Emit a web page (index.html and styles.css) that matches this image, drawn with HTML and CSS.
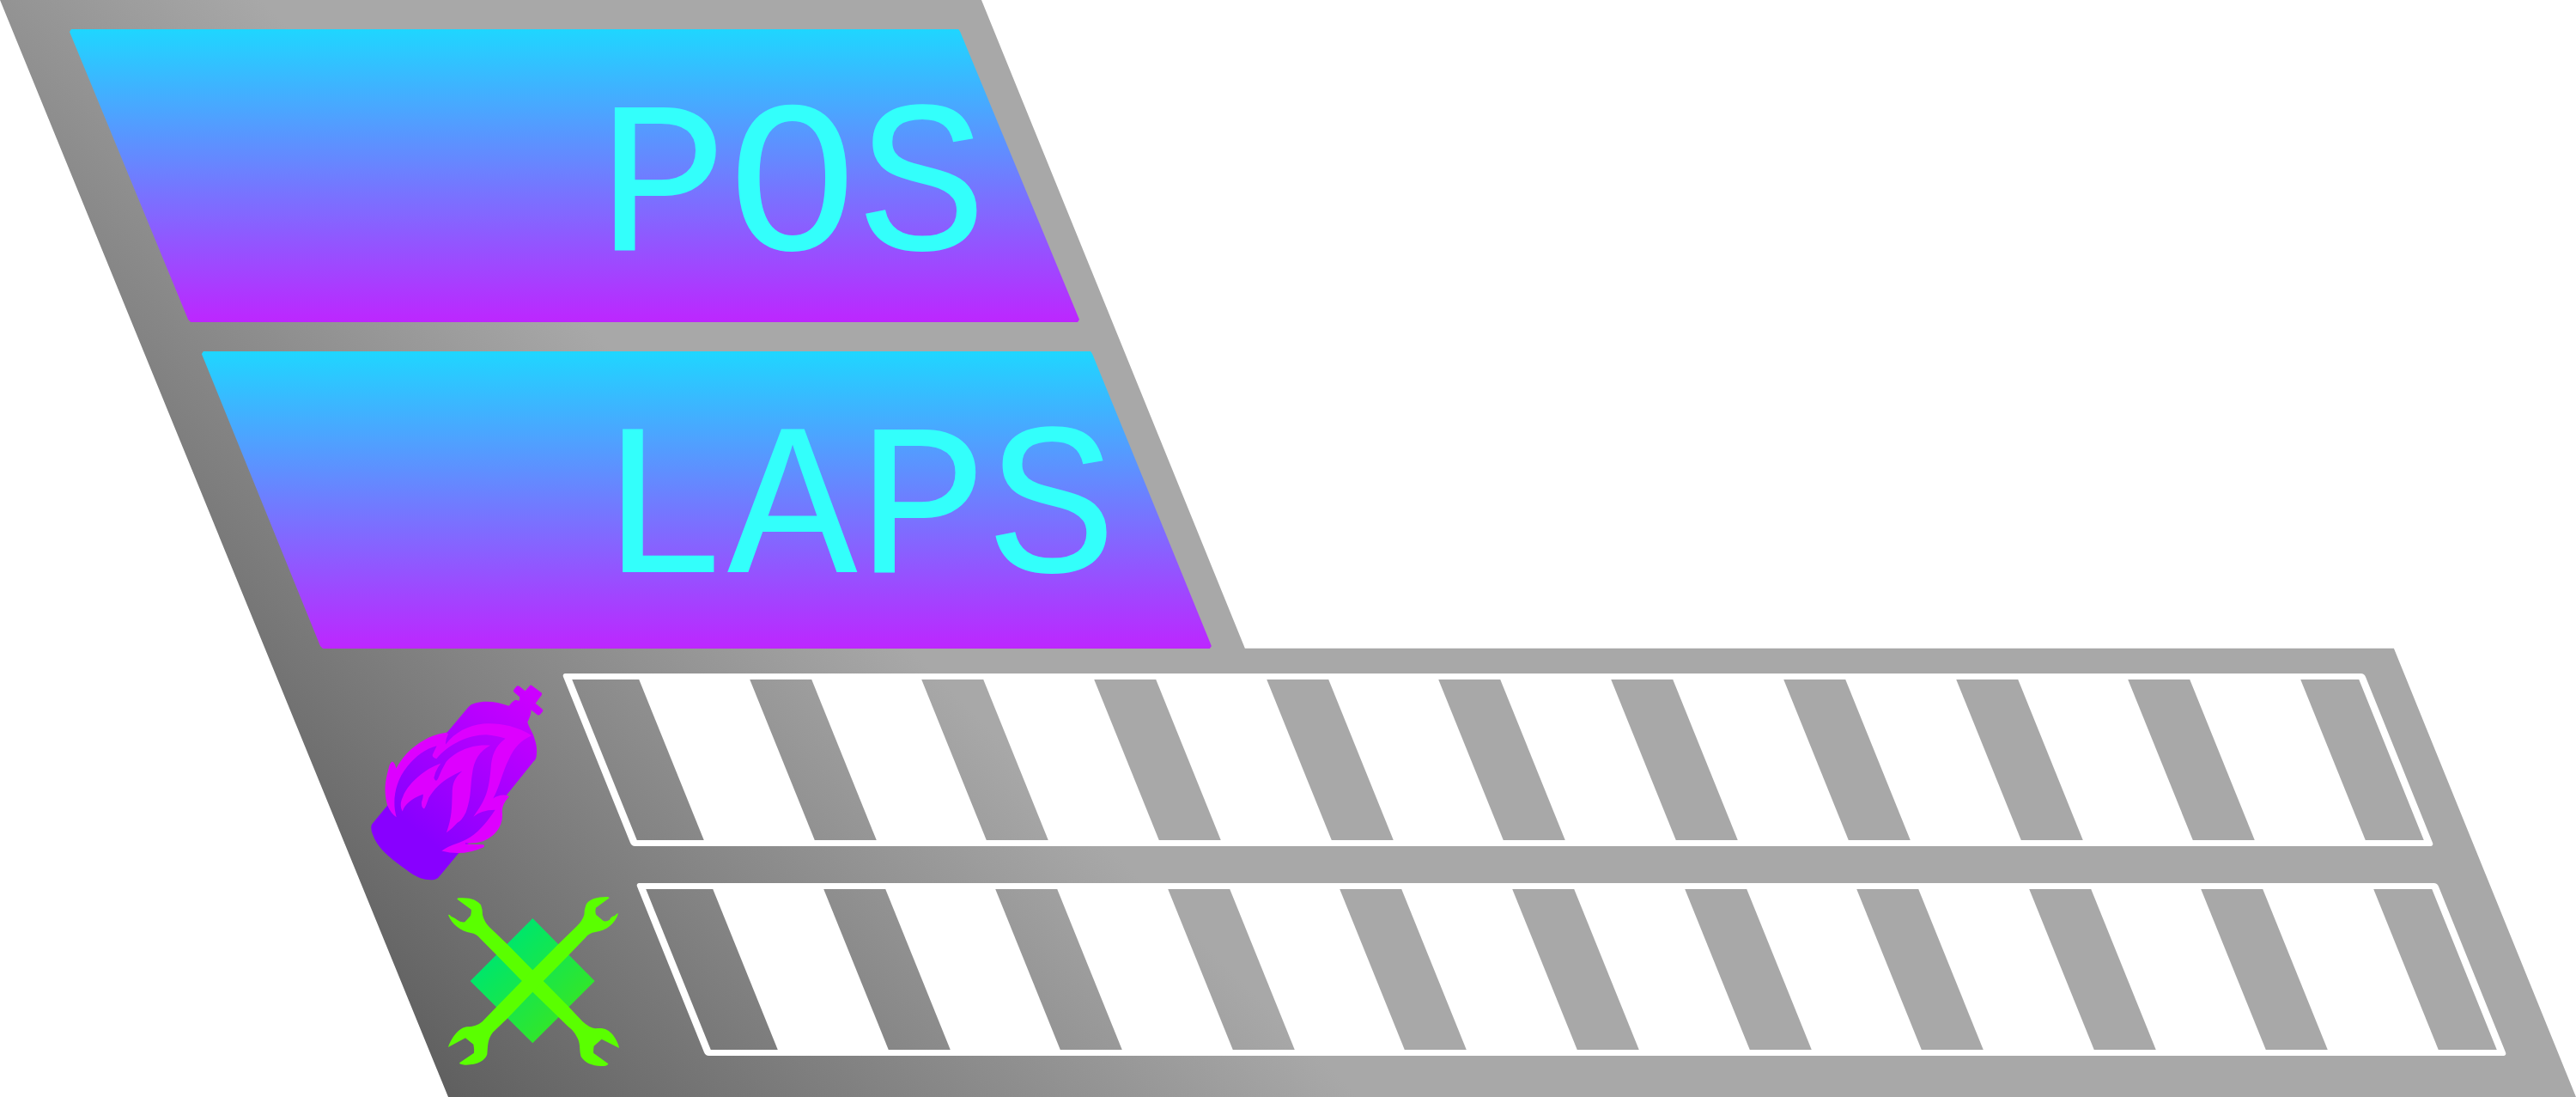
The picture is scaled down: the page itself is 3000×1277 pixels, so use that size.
FILE: index.html
```html
<!DOCTYPE html>
<html lang="en">
<head>
<meta charset="utf-8">
<title>Race HUD</title>
<link rel="stylesheet" href="styles.css">
</head>
<body>
<main class="hud">
  <section class="panel panel-pos"><h2 class="label">POS</h2></section>
  <section class="panel panel-laps"><h2 class="label">LAPS</h2></section>
  <section class="gauge gauge-boost">
    <svg class="icon icon-boost" viewBox="38 50 603 683" aria-hidden="true">
      <defs>
        <linearGradient id="body" gradientUnits="userSpaceOnUse" x1="200" y1="560" x2="600" y2="80">
          <stop offset="0" stop-color="#8800ff"/><stop offset="1" stop-color="#cc00ff"/>
        </linearGradient>
      </defs>
      <path fill="url(#body)" d="M305 215L378 128Q386 118 402 114C440 104 480 110 520 124Q532 108 543 103L556 106L558 93L538 76Q534 71 538 66L547 55Q551 51 556 55L577 71L592 54Q596 49 601 53L633 77Q637 81 634 86L613 115L636 134Q641 139 638 143L629 154Q625 158 620 155L597 137Q600 150 585 180C592 205 604 215 610 240C618 262 619 285 615 305Q613 312 606 318L512 435L480 500L343 640L278 718Q270 730 255 731C215 733 190 718 150 688C100 650 60 620 43 570Q35 545 42 536L95 472L120 350L250 240Z"/>
      <path fill="#dd00ff" d="M302 217C250 222 190 255 150 305Q135 325 126 342Q122 322 113 318Q103 322 99 345C84 400 85 430 95 470Q108 500 127 512C112 460 120 390 165 335C195 298 230 272 268 263Q262 275 253 295Q252 303 267 308C310 255 380 225 440 224Q480 227 508 238C470 265 460 300 457 340C450 420 440 450 396 511Q420 488 472 487C450 520 420 560 385 582C350 605 320 605 285 630Q360 650 432 617Q437 610 430 608L368 606L368 602Q400 605 430 596C470 580 500 545 497 500Q492 470 521 440Q515 434 500 435Q480 436 465 447C490 400 495 360 520 310Q545 250 600 227C540 190 480 182 430 186C380 192 330 215 299 258Q298 240 308 222Z"/>
      <path fill="#dd00ff" d="M455 262C390 255 330 285 300 320Q285 345 272 378Q264 393 258 375Q262 350 282 325C220 345 165 400 150 440C140 460 140 475 148 492Q160 455 220 432Q222 440 215 460Q214 480 224 483Q228 480 240 445C265 400 310 370 357 351C330 375 322 395 322 430C320 480 322 510 302 566Q325 550 340 532Q355 525 370 495C390 440 385 400 392 360Q400 290 455 262Z"/>
    </svg>
    <div class="track"><i class="cell"></i><i class="cell"></i><i class="cell"></i><i class="cell"></i><i class="cell"></i><i class="cell"></i><i class="cell"></i><i class="cell"></i><i class="cell"></i><i class="cell"></i></div>
  </section>
  <section class="gauge gauge-repair">
    <svg class="icon icon-repair" viewBox="66 72 597 591" aria-hidden="true">
      <defs>
        <linearGradient id="plate" gradientUnits="userSpaceOnUse" x1="252" y1="257" x2="470" y2="475">
          <stop offset="0" stop-color="#00e669"/><stop offset="1" stop-color="#30e62c"/>
        </linearGradient>
      </defs>
      <path fill="url(#plate)" d="M361 147L578 366L361 583L143 366Z"/>
      <g fill="#5aff00">
        <path d="M97 80Q98 76 104 76C140 76 160 78 180 100Q186 115 186 135Q192 160 210 178L272 237L361 328L487 456L535 507Q560 530 580 532C610 528 625 535 642 555Q660 580 663 600L602 569L575 593Q572 612 574 618L625 655Q624 662 610 663C575 664 545 655 530 630C522 600 530 585 515 560Q505 540 485 525L361 404L235 275L180 220Q165 200 145 198C110 192 80 170 66 135Q70 132 76 140Q90 145 98 153Q108 162 124 160L144 138Q148 125 146 116Z"/>
        <path d="M629 76Q628 72 620 72C585 72 560 80 548 98Q541 115 541 135Q535 155 515 175L451 237L361 328L235 456L185 508Q165 526 130 526C100 530 75 570 66 597L126 565L154 587Q158 605 156 617L105 652Q106 658 125 659C165 660 195 645 202 622C205 590 203 570 222 545L272 497L361 404L487 275L545 215Q558 198 580 195C620 190 650 165 660 130Q655 129 648 138Q635 140 630 152Q618 160 608 156L583 135Q578 125 582 110Z"/>
      </g>
    </svg>
    <div class="track"><i class="cell"></i><i class="cell"></i><i class="cell"></i><i class="cell"></i><i class="cell"></i><i class="cell"></i><i class="cell"></i><i class="cell"></i><i class="cell"></i><i class="cell"></i></div>
  </section>
</main>
</body>
</html>
```
FILE: styles.css
```css
* { box-sizing: border-box; }

body {
  margin: 0;
  background: #fff;
}

/* L-shaped slanted frame */
.hud {
  padding-top: 34px;
  background: linear-gradient(45deg, #606060 12.4%, #a8a8a8 37%);
  clip-path: polygon(0 0, 38.1% 0, 48.33% 59.1%, 92.93% 59.1%, 100% 100%, 17.4% 100%);
}

.panel {
  width: 39.2%;
  padding-top: 20px;
  background: linear-gradient(180deg, #1fd6ff, #bd26ff);
  clip-path: polygon(2px 0, calc(88.2% - 2px) 0, 88.2% 3px, 100% calc(100% - 3px), calc(100% - 2px) 100%, 12% 100%, calc(12% - 3px) calc(100% - 3px), 0 3px);
}

.panel-pos {
  height: 341px;
  margin-left: 2.7%;
  margin-bottom: 34px;
  padding-left: 20.5%;
}

.panel-laps {
  height: 346px;
  margin-left: 7.83%;
  padding-left: 15.37%;
}

.label {
  margin: 0;
  color: #33fffb;
  font: 400 252px/341px "Liberation Mono", monospace;
}

.gauge {
  display: flex;
  align-items: flex-start;
}

.gauge-boost {
  height: 273px;
  padding: 29px 6.87% 0 14.4%;
  gap: 62px;
}

.gauge-repair {
  height: 249px;
  padding: 0 4.03% 0 17.4%;
  gap: 60px;
}

.icon { flex: none; }

.icon-boost {
  width: 201px;
  height: 228px;
  margin-top: 13px;
}

.icon-repair {
  width: 199px;
  height: 197px;
  margin-top: 16px;
}

.track {
  flex: 1;
  display: flex;
  gap: 72px;
  height: 201px;
  padding: 0 68px 0 78px;
  border: solid #fff;
  border-width: 7px 9px;
  border-radius: 4px;
  transform: skewX(22deg);
}

.cell {
  flex: 1;
  background: #fff;
}
```
